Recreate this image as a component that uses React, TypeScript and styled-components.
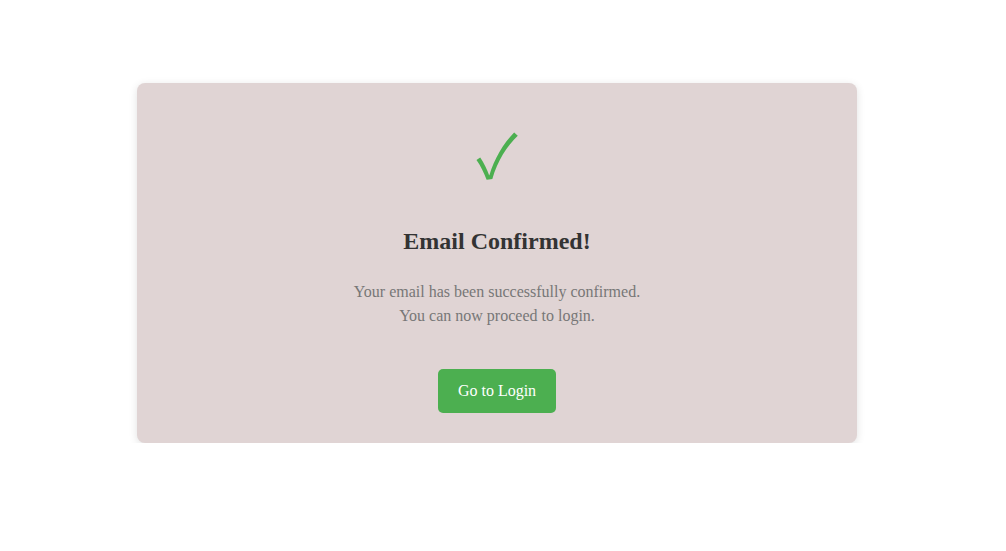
import React from "react";
import styled, { createGlobalStyle } from "styled-components";

const Global = createGlobalStyle`
  html, body { margin: 0; padding: 0; background: #ffffff; }
  body { font-family: "Liberation Serif", "Times New Roman", serif; }
`;

const Page = styled.div`
  display: flex;
  justify-content: center;
  padding: 83px 12px 0 0;
`;

const Card = styled.div`
  width: 720px;
  box-sizing: border-box;
  background: #e0d4d4;
  border-radius: 8px;
  box-shadow: 0 2px 8px rgba(0, 0, 0, 0.12);
  padding: 39px 40px 30px;
  display: flex;
  flex-direction: column;
  align-items: center;
  text-align: center;
`;

const Check = styled.div`
  font-family: "Noto Sans CJK SC", "DejaVu Sans", sans-serif;
  font-size: 60px;
  line-height: 60px;
  height: 60px;
  color: #4caf50;
`;

const Title = styled.h1`
  font-size: 24px;
  font-weight: bold;
  color: #333333;
  margin: 46px 0 0;
`;

const Message = styled.p`
  font-size: 16px;
  line-height: 24px;
  color: #777777;
  margin: 25px 0 0;
`;

const Button = styled.button`
  margin-top: 41px;
  background: #4caf50;
  color: #ffffff;
  border: none;
  border-radius: 5px;
  padding: 12px 20px;
  font-family: "Liberation Serif", "Times New Roman", serif;
  font-size: 16px;
  line-height: 20px;
  cursor: pointer;
`;

export default function App() {
  return (
    <>
      <Global />
      <Page>
        <Card>
          <Check>✓</Check>
          <Title>Email Confirmed!</Title>
          <Message>
            Your email has been successfully confirmed.
            <br />
            You can now proceed to login.
          </Message>
          <Button>Go to Login</Button>
        </Card>
      </Page>
    </>
  );
}
